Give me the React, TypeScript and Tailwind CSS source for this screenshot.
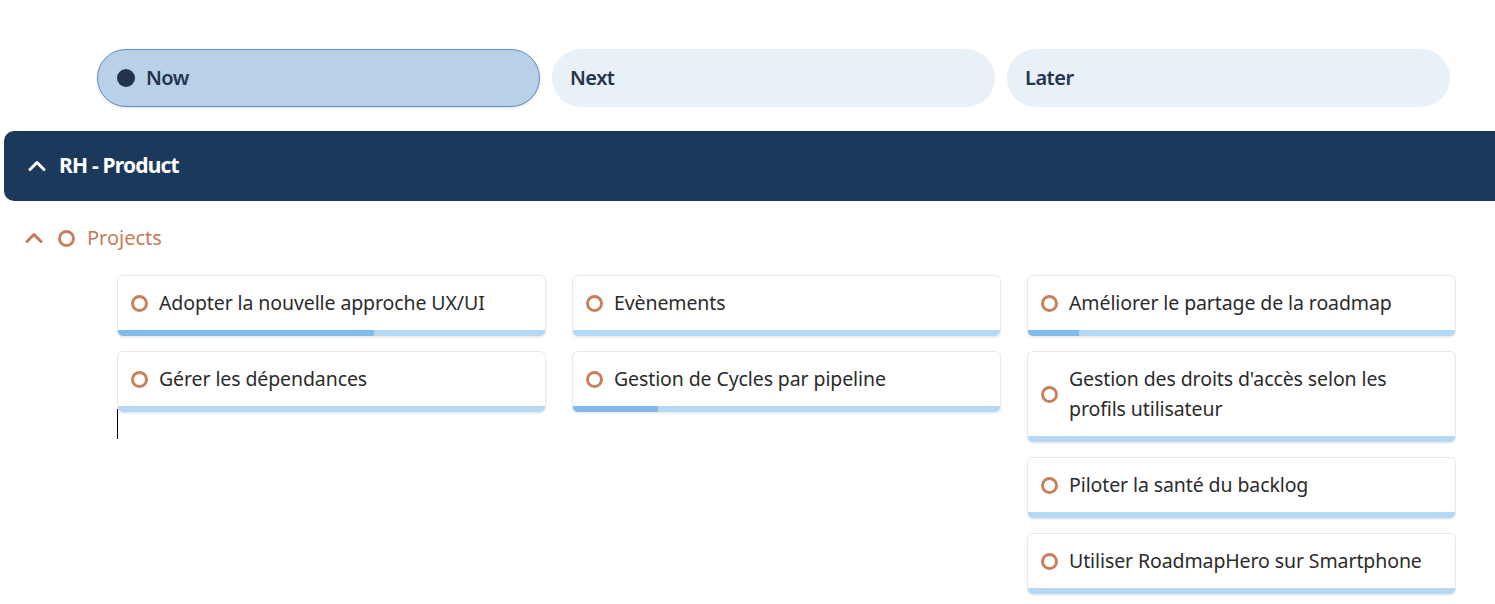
import React from "react";

type Item = { title: string; progress: number };

const columns: Item[][] = [
  [
    { title: "Adopter la nouvelle approche UX/UI", progress: 60 },
    { title: "Gérer les dépendances", progress: 0 },
  ],
  [
    { title: "Evènements", progress: 0 },
    { title: "Gestion de Cycles par pipeline", progress: 20 },
  ],
  [
    { title: "Améliorer le partage de la roadmap", progress: 12 },
    { title: "Gestion des droits d'accès selon les profils utilisateur", progress: 0 },
    { title: "Piloter la santé du backlog", progress: 0 },
    { title: "Utiliser RoadmapHero sur Smartphone", progress: 0 },
  ],
];

const font = { fontFamily: '"Noto Sans", "Open Sans", Arial, sans-serif' };

function Chevron({ className }: { className?: string }) {
  return (
    <svg viewBox="0 0 24 24" className={className} fill="none" stroke="currentColor" strokeWidth={3} strokeLinecap="round" strokeLinejoin="round">
      <path d="M5 15.5l7-7 7 7" />
    </svg>
  );
}

function Card({ item }: { item: Item }) {
  return (
    <div className="flex flex-col overflow-hidden rounded-[6px] border border-[#e6eaf0] bg-white shadow-[0_1px_2px_rgba(0,0,0,0.06)]">
      <div className="flex items-center gap-[11px] py-[12px] pl-[13px] pr-[10px]">
        <span className="h-[17px] w-[17px] shrink-0 rounded-full border-[3px] border-[#c8805c]" />
        <span className="text-[19.5px] leading-[30px] tracking-[-0.1px] text-[#2b2b2b]">{item.title}</span>
      </div>
      <div className="h-[6px] w-full bg-[#b5d8f5]">
        <div className="h-full bg-[#80bbea]" style={{ width: `${item.progress}%` }} />
      </div>
    </div>
  );
}

export default function App() {
  return (
    <div className="min-h-[604px] w-full overflow-hidden bg-white" style={font}>
      <div className="grid grid-cols-3 gap-[12px] pl-[97px] pr-[45px] pt-[49px]">
        <div className="flex h-[58px] items-center gap-[11px] rounded-full border border-[#5e8fca] bg-[#b9d1e8] pl-[19px] shadow-[0_1px_3px_rgba(0,0,0,0.12)]">
          <span className="h-[18px] w-[18px] rounded-full bg-[#23344d]" />
          <span className="text-[20px] font-semibold tracking-[-0.5px] text-[#23344d]">Now</span>
        </div>
        <div className="flex h-[58px] items-center rounded-full bg-[#e8f0f8] pl-[18px]">
          <span className="text-[20px] font-semibold tracking-[-0.5px] text-[#23344d]">Next</span>
        </div>
        <div className="flex h-[58px] items-center rounded-full bg-[#e8f0f8] pl-[18px]">
          <span className="text-[20px] font-semibold tracking-[-0.5px] text-[#23344d]">Later</span>
        </div>
      </div>

      <div className="ml-[4px] mt-[24px] flex h-[70px] items-center gap-[10px] rounded-l-[10px] bg-[#1b3a5b] pl-[21px]">
        <Chevron className="h-[24px] w-[24px] text-white" />
        <span className="text-[21px] font-bold tracking-[-0.8px] text-white">RH - Product</span>
      </div>

      <div className="flex h-[74px] items-center pl-[22px] text-[#c47b59]">
        <Chevron className="h-[24px] w-[24px]" />
        <span className="ml-[12px] h-[17px] w-[17px] rounded-full border-[3px] border-[#c8805c]" />
        <span className="ml-[12px] text-[20px]">Projects</span>
      </div>

      <div className="grid grid-cols-3 gap-[26px] pl-[117px] pr-[39px]">
        {columns.map((col, i) => (
          <div key={i} className="flex flex-col gap-[14px]">
            {col.map((item) => (
              <Card key={item.title} item={item} />
            ))}
            {i === 0 && <div className="-mt-[18px] h-[30px] w-px bg-black" />}
          </div>
        ))}
      </div>
    </div>
  );
}
